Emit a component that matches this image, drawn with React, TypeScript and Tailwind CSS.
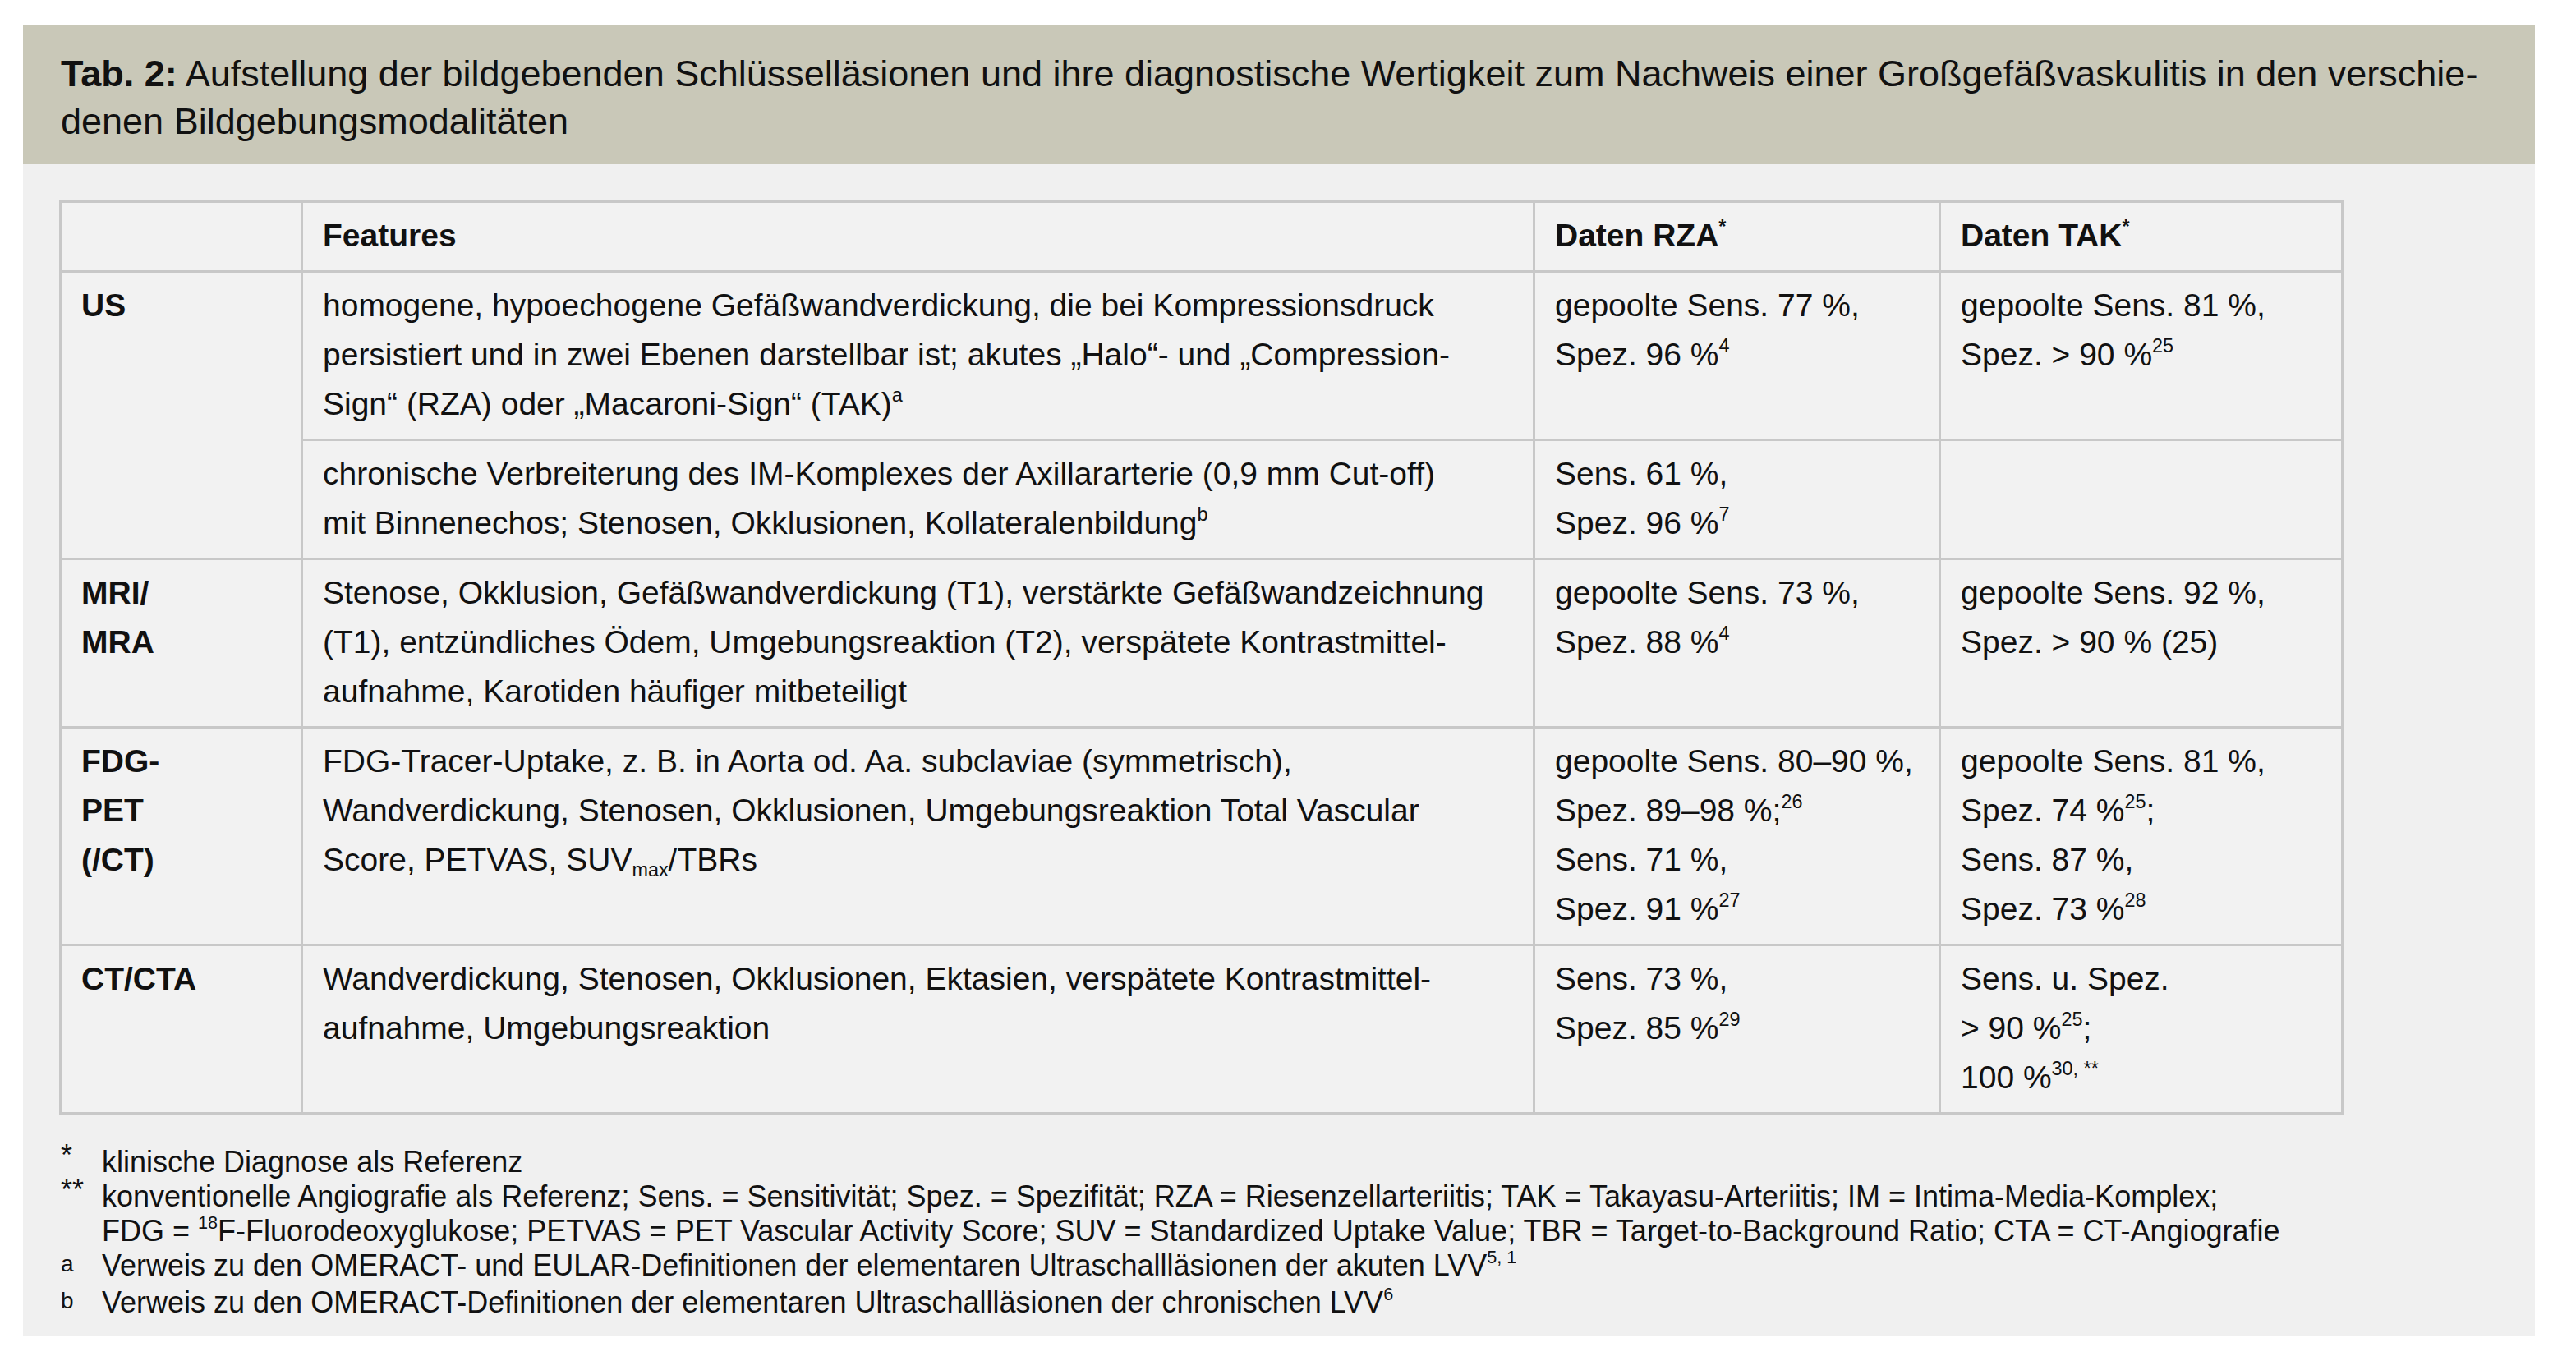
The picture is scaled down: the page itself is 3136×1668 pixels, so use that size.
import type { ReactNode } from 'react';

const sans = "font-['Liberation_Sans',Arial,sans-serif]";

function Sup({ children }: { children: ReactNode }) {
  return <sup className="text-[0.6em] -top-[0.7em]">{children}</sup>;
}

function Cell({
  children,
  bold,
  rowSpan,
}: {
  children?: ReactNode;
  bold?: boolean;
  rowSpan?: number;
}) {
  return (
    <td
      rowSpan={rowSpan}
      className={`border-[3px] border-[#c8c8c8] px-[24px] pt-[10px] pb-[12px] align-top whitespace-nowrap ${
        bold ? 'font-bold' : ''
      }`}
    >
      {children}
    </td>
  );
}

const footnotes: { mark: ReactNode; text: ReactNode }[] = [
  { mark: <span className="relative -top-[8px]">*</span>, text: 'klinische Diagnose als Referenz' },
  {
    mark: <span className="relative -top-[8px]">**</span>,
    text: (
      <>
        konventionelle Angiografie als Referenz; Sens. = Sensitivität; Spez. = Spezifität; RZA = Riesenzellarteriitis; TAK = Takayasu-Arteriitis; IM = Intima-Media-Komplex;
        <br />
        FDG = <Sup>18</Sup>F-Fluorodeoxyglukose; PETVAS = PET Vascular Activity Score; SUV = Standardized Uptake Value; TBR = Target-to-Background Ratio; CTA = CT-Angiografie
      </>
    ),
  },
  {
    mark: <span className="relative -top-[5px] text-[28px]">a</span>,
    text: (
      <>
        Verweis zu den OMERACT- und EULAR-Definitionen der elementaren Ultraschallläsionen der akuten LVV<Sup>5, 1</Sup>
      </>
    ),
  },
  {
    mark: <span className="relative -top-[5px] text-[28px]">b</span>,
    text: (
      <>
        Verweis zu den OMERACT-Definitionen der elementaren Ultraschallläsionen der chronischen LVV<Sup>6</Sup>
      </>
    ),
  },
];

export default function App() {
  return (
    <div className={`min-h-screen bg-white pt-[30px] px-[28px] text-[#111] ${sans}`}>
      <div className="w-[3058px] bg-[#f0f0f0] pb-[17px]">
        {/* Title band */}
        <div className="bg-[#c9c8b8] h-[170px] pl-[46px] pt-[31px] text-[45px] leading-[58px] whitespace-nowrap">
          <b>Tab. 2:</b> Aufstellung der bildgebenden Schlüsselläsionen und ihre diagnostische Wertigkeit zum Nachweis einer Großgefäßvaskulitis in den verschie-
          <br />
          denen Bildgebungsmodalitäten
        </div>

        {/* Table */}
        <div className="pl-[44px] pt-[44px]">
          <table className="table-fixed border-collapse bg-[#f2f2f2] text-[39px] leading-[60px] w-[2778px]">
            <colgroup>
              <col className="w-[294px]" />
              <col className="w-[1500px]" />
              <col className="w-[494px]" />
              <col className="w-[490px]" />
            </colgroup>
            <tbody>
              <tr>
                <Cell />
                <Cell bold>Features</Cell>
                <Cell bold>
                  Daten RZA<Sup>*</Sup>
                </Cell>
                <Cell bold>
                  Daten TAK<Sup>*</Sup>
                </Cell>
              </tr>
              <tr>
                <Cell bold rowSpan={2}>
                  US
                </Cell>
                <Cell>
                  homogene, hypoechogene Gefäßwandverdickung, die bei Kompressionsdruck
                  <br />
                  persistiert und in zwei Ebenen darstellbar ist; akutes „Halo“- und „Compression-
                  <br />
                  Sign“ (RZA) oder „Macaroni-Sign“ (TAK)<Sup>a</Sup>
                </Cell>
                <Cell>
                  gepoolte Sens. 77 %,
                  <br />
                  Spez. 96 %<Sup>4</Sup>
                </Cell>
                <Cell>
                  gepoolte Sens. 81 %,
                  <br />
                  Spez. &gt; 90 %<Sup>25</Sup>
                </Cell>
              </tr>
              <tr>
                <Cell>
                  chronische Verbreiterung des IM-Komplexes der Axillararterie (0,9 mm Cut-off)
                  <br />
                  mit Binnenechos; Stenosen, Okklusionen, Kollateralenbildung<Sup>b</Sup>
                </Cell>
                <Cell>
                  Sens. 61 %,
                  <br />
                  Spez. 96 %<Sup>7</Sup>
                </Cell>
                <Cell />
              </tr>
              <tr>
                <Cell bold>
                  MRI/
                  <br />
                  MRA
                </Cell>
                <Cell>
                  Stenose, Okklusion, Gefäßwandverdickung (T1), verstärkte Gefäßwandzeichnung
                  <br />
                  (T1), entzündliches Ödem, Umgebungsreaktion (T2), verspätete Kontrastmittel-
                  <br />
                  aufnahme, Karotiden häufiger mitbeteiligt
                </Cell>
                <Cell>
                  gepoolte Sens. 73 %,
                  <br />
                  Spez. 88 %<Sup>4</Sup>
                </Cell>
                <Cell>
                  gepoolte Sens. 92 %,
                  <br />
                  Spez. &gt; 90 % (25)
                </Cell>
              </tr>
              <tr>
                <Cell bold>
                  FDG-
                  <br />
                  PET
                  <br />
                  (/CT)
                </Cell>
                <Cell>
                  FDG-Tracer-Uptake, z. B. in Aorta od. Aa. subclaviae (symmetrisch),
                  <br />
                  Wandverdickung, Stenosen, Okklusionen, Umgebungsreaktion Total Vascular
                  <br />
                  Score, PETVAS, SUV<sub className="text-[0.6em] -bottom-[0.3em]">max</sub>/TBRs
                </Cell>
                <Cell>
                  gepoolte Sens. 80–90 %,
                  <br />
                  Spez. 89–98 %;<Sup>26</Sup>
                  <br />
                  Sens. 71 %,
                  <br />
                  Spez. 91 %<Sup>27</Sup>
                </Cell>
                <Cell>
                  gepoolte Sens. 81 %,
                  <br />
                  Spez. 74 %<Sup>25</Sup>;
                  <br />
                  Sens. 87 %,
                  <br />
                  Spez. 73 %<Sup>28</Sup>
                </Cell>
              </tr>
              <tr>
                <Cell bold>CT/CTA</Cell>
                <Cell>
                  Wandverdickung, Stenosen, Okklusionen, Ektasien, verspätete Kontrastmittel-
                  <br />
                  aufnahme, Umgebungsreaktion
                </Cell>
                <Cell>
                  Sens. 73 %,
                  <br />
                  Spez. 85 %<Sup>29</Sup>
                </Cell>
                <Cell>
                  Sens. u. Spez.
                  <br />
                  &gt; 90 %<Sup>25</Sup>;
                  <br />
                  100 %<Sup>30, **</Sup>
                </Cell>
              </tr>
            </tbody>
          </table>
        </div>

        {/* Footnotes */}
        <div className="pl-[46px] pt-[37px] text-[36px] leading-[42px]">
          {footnotes.map((f, i) => (
            <div key={i} className="flex">
              <div className="w-[50px] shrink-0">{f.mark}</div>
              <div className="whitespace-nowrap">{f.text}</div>
            </div>
          ))}
        </div>
      </div>
    </div>
  );
}
